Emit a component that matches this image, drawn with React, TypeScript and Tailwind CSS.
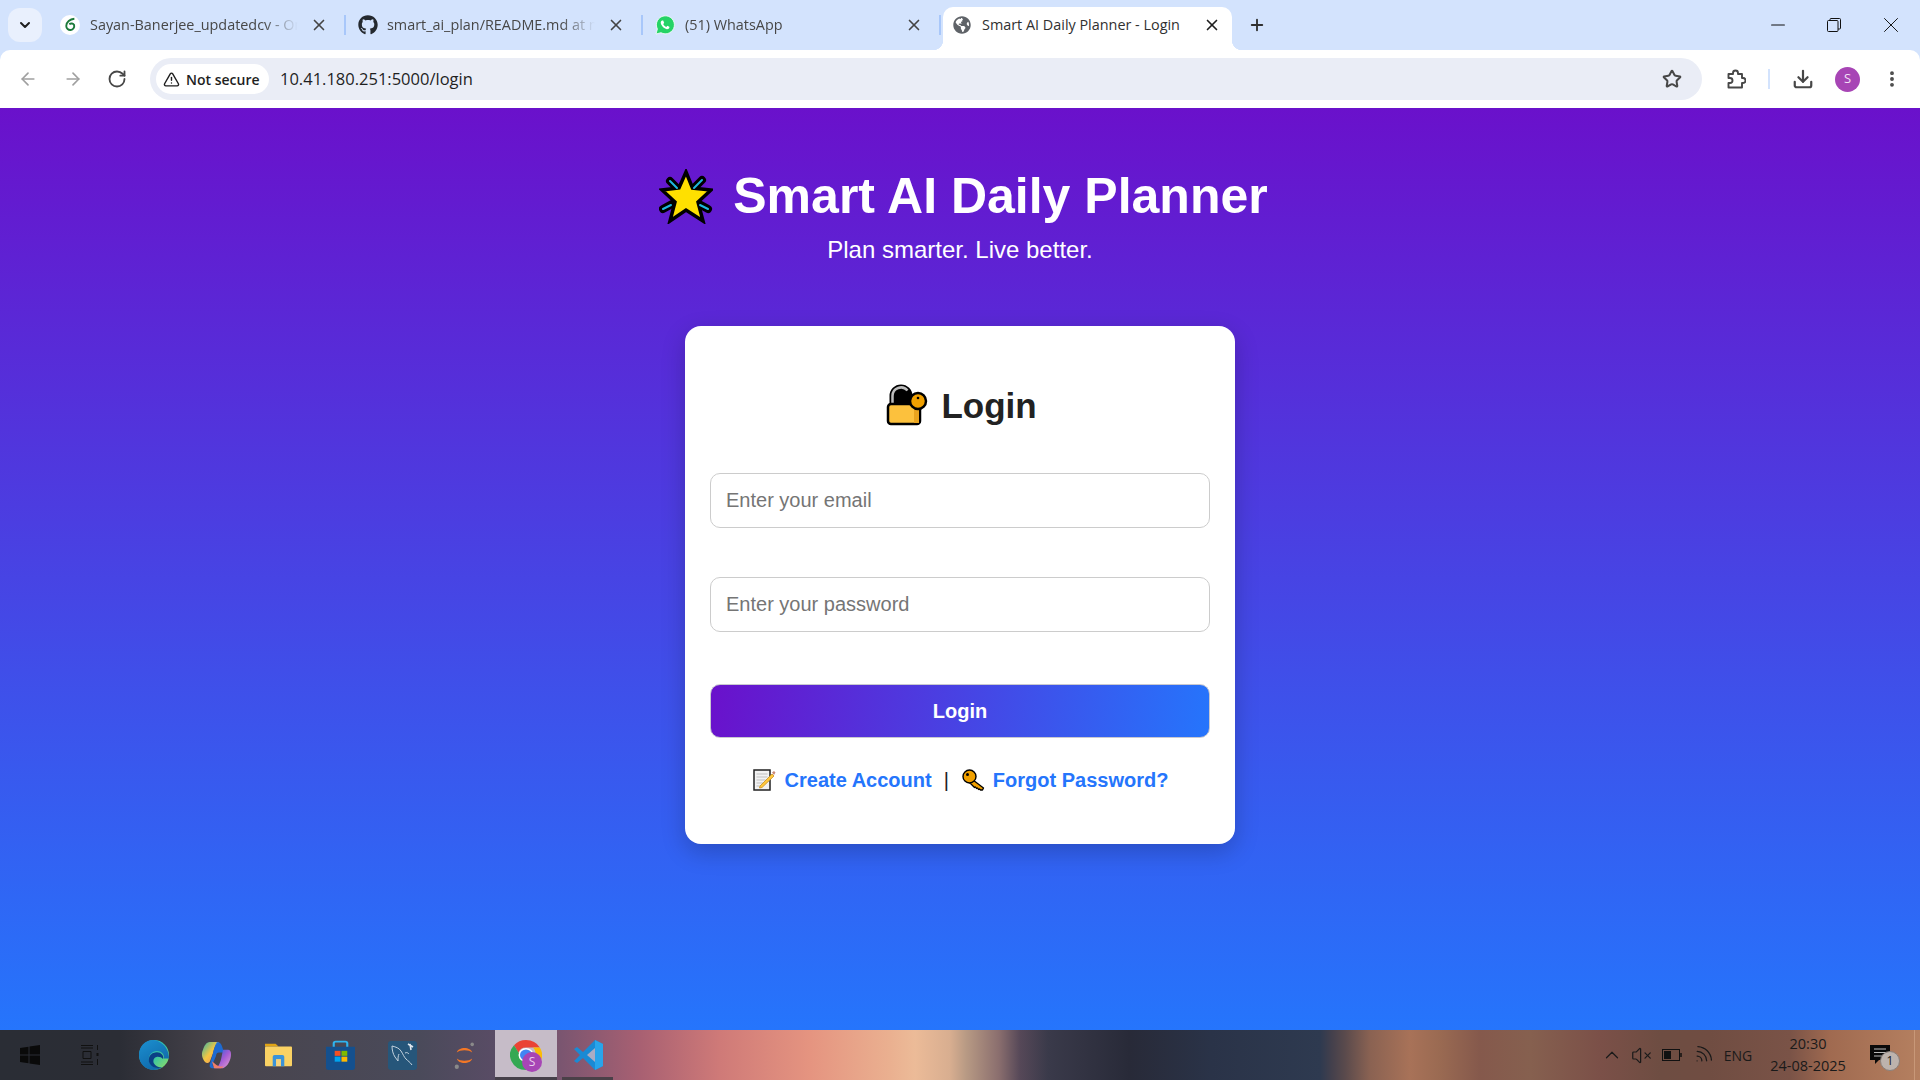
import {
  ArrowLeft,
  ArrowRight,
  ChevronDown,
  ChevronUp,
  Download,
  EllipsisVertical,
  Minus,
  Plus,
  RotateCw,
  Star,
  TriangleAlert,
  VolumeX,
  Wifi,
  X,
} from "lucide-react";
import { FaGithub, FaGlobeAmericas } from "react-icons/fa";
import type { ReactNode } from "react";

const OverleafIcon = () => (
  <svg viewBox="0 0 16 16" className="w-[20px] h-[20px] shrink-0">
    <circle cx="8" cy="8" r="8" fill="#fff" />
    <path d="M11.5 3C8 3.3 5 5.5 5 8.8a3.2 3.2 0 1 0 6.3-.8C10.6 6.6 8.8 6.5 7.4 7.3" fill="none" stroke="#1c7a3a" strokeWidth="1.5" />
  </svg>
);

const WhatsAppIcon = () => (
  <svg viewBox="0 0 20 20" className="w-[20px] h-[20px] shrink-0">
    <path d="M1 19l1.4-5A9 9 0 1 1 6 17.7z" fill="#25d366" stroke="#fff" strokeWidth="0.8" />
    <path d="M7 5.5c-.8.4-1.5 1.4-1.2 2.8.5 2.4 3.3 5.4 6 5.9 1.3.2 2.3-.5 2.6-1.4l-.1-1-2-1-1 1.1c-1.300-.5-2.500-1.700-3.100-3l1-1-1-2.300z" fill="#fff" />
  </svg>
);

const tabs = [
  { title: "Sayan-Banerjee_updatedcv - Online LaTeX Editor", icon: <OverleafIcon />, width: "w-[297px]" },
  { title: "smart_ai_plan/README.md at main", icon: <FaGithub className="ml-[1px] mr-[-1px] w-[20px] h-[20px] shrink-0 text-[#24292f]" />, width: "w-[298px]" },
  { title: "(51) WhatsApp", icon: <WhatsAppIcon />, width: "w-[298px]" },
];

const SparkleStar = () => (
  <svg viewBox="0 0 54 55" className="w-[54px] h-[55px] shrink-0">
    <g stroke="#000" strokeWidth="8" strokeLinecap="round">
      <path d="M11 12l7 7M43 11l-9 9M4 40l9-5M49 40l-9-5" />
    </g>
    <path d="M27 3l6.500 16L52 21 39 33l5 19-17-11-16 11 5-19L3 21l17-2z" fill="#ffe000" stroke="#000" strokeWidth="3.500" strokeLinejoin="miter" />
    <g stroke="#1eb8e0" strokeWidth="2" strokeLinecap="round">
      <path d="M11 12l7 7M43 11l-8 8M4 40l8-4M49 40l-8-4" />
    </g>
  </svg>
);

const LockKey = () => (
  <svg viewBox="0 0 42 42" className="w-[42px] h-[42px] shrink-0">
    <path d="M3.500 24V12a11.500 11.500 0 0 1 23 0v12z" fill="#000" />
    <path d="M6.500 22V12a8.500 8.500 0 0 1 15-5.500" fill="none" stroke="#bdbdbd" strokeWidth="2.500" />
    <rect x="2" y="20" width="32" height="20" rx="3" fill="#fcc13d" stroke="#000" strokeWidth="2.500" />
    <path d="M28 25h5v14h-5z" fill="#e9a41f" />
    <circle cx="32" cy="17" r="8" fill="#f0a000" stroke="#000" strokeWidth="2.500" />
    <circle cx="32" cy="14" r="1.300" fill="#000" />
  </svg>
);

const Memo = () => (
  <svg viewBox="0 0 23 22" className="w-[23px] h-[22px] shrink-0">
    <path d="M1 1h16v20H1z" fill="#f2f2f2" stroke="#222" strokeWidth="1.500" />
    <path d="M3.500 5h11M3.500 8h11M3.500 11h9M3.500 14h7M3.500 17h5" stroke="#bfbfbf" strokeWidth="1" />
    <path d="M7 17l12-12 2 2L9 18.500 6.500 19z" fill="#ffc83d" stroke="#c98f1c" strokeWidth="0.800" />
    <path d="M19 3.500l2-1.500 1.500 1.500-1.500 2.500z" fill="#c98a78" />
  </svg>
);

const KeyIcon = () => (
  <svg viewBox="0 0 23 22" className="w-[23px] h-[22px] shrink-0">
    <path d="M8 14l3-3 10.500 8-1 2h-2l-1-1-1 .5-1-1.500-1 .5-1-1.500-1 .5-2-2z" fill="#f0a000" stroke="#000" strokeWidth="1.300" strokeLinejoin="round" />
    <circle cx="7.500" cy="7.500" r="6.500" fill="#f0a000" stroke="#000" strokeWidth="1.400" />
    <circle cx="5.500" cy="5.500" r="1.500" fill="#000" />
  </svg>
);

const WindowsLogo = () => (
  <svg viewBox="0 0 20 20" className="w-[20px] h-[20px]">
    <path d="M0 3l8.500-1.200V9.500H0zM9.500 1.600L20 0v9.500H9.500zM0 10.500h8.500v7.700L0 17zM9.500 10.500H20V20L9.500 18.400z" fill="#0a0a0a" />
  </svg>
);

const TaskView = () => (
  <svg viewBox="0 0 20 20" className="w-[20px] h-[20px]" fill="none" stroke="#111" strokeWidth="1">
    <path d="M1 0.500h12M1 3h12M3 6.500h8v7H3zM1 17h12M1 19.500h12M17.500 0v5M17.500 14v6" />
    <path d="M17.500 8v3" strokeWidth="2" />
  </svg>
);

const EdgeIcon = () => (
  <svg viewBox="0 0 30 30" className="w-[30px] h-[30px]">
    <defs>
      <linearGradient id="edgeA" x1="0" y1="0" x2="1" y2="1">
        <stop offset="0" stopColor="#1aa5d8" />
        <stop offset="0.55" stopColor="#36c4a5" />
        <stop offset="1" stopColor="#9ae05e" />
      </linearGradient>
      <linearGradient id="edgeB" x1="0" y1="0" x2="0.6" y2="1">
        <stop offset="0" stopColor="#1c8fd0" />
        <stop offset="1" stopColor="#0c62ab" />
      </linearGradient>
    </defs>
    <circle cx="15" cy="15" r="15" fill="url(#edgeA)" />
    <path d="M14 0C6 0 0 6.500 0 15c0 8.500 6.500 15 14.500 15 3.500 0 6.500-1 9-3-4 1.500-10 .5-12.500-3.500-2.500-4-1-9.500 3-11.500 3.500-1.700 8-1 10 2 1 1.500 1 3 .5 4.500h5.500C30 12 27 6 22 3c-2.500-2-5.500-3-8-3z" fill="url(#edgeB)" opacity="0.95" />
    <path d="M14 13c-4 2-5.500 7-3 11 2.500 3.800 8 5 12.500 3-3 .8-7-.5-8.500-3.500-1.500-3 0-6 2.500-6.500 2.500-.5 5 .5 6.500 2 .5-2 0-3.500-1-4.500-2-2.500-5.500-3-8.500-1.500z" fill="#0b3f86" />
  </svg>
);

const CopilotIcon = () => (
  <svg viewBox="0 0 30 32" preserveAspectRatio="none" className="w-[30px] h-[28px]">
    <defs>
      <linearGradient id="copA" x1="0" y1="0" x2="1" y2="1">
        <stop offset="0" stopColor="#2fb5a8" />
        <stop offset="0.5" stopColor="#f4c542" />
        <stop offset="1" stopColor="#f08a5b" />
      </linearGradient>
      <linearGradient id="copB" x1="0" y1="0" x2="1" y2="1">
        <stop offset="0" stopColor="#1e63d6" />
        <stop offset="0.5" stopColor="#a35bd6" />
        <stop offset="1" stopColor="#e6a0d0" />
      </linearGradient>
    </defs>
    <path d="M9 1h9c-4 3-5 8-6 13l-3 9c-1 2-3 3-5 1-3-4-4-10-2-14 1-4 3-9 7-9z" fill="url(#copA)" />
    <path d="M16 1c3 0 4 2 5 5l2 7h-5c-2 0-3 2-3 4l-3 8c-1 3 0 5 3 6h-4c-2 0-3-2-2-5l3-12c1-5 2-10 4-13z" fill="#1a6fe0" opacity="0.9" />
    <path d="M22 10h5c2 0 3 2 3 5 0 6-3 14-8 16h-8c4-2 5-6 6-10l2-11z" fill="url(#copB)" />
    <path d="M11 23l2 8h7c1 0 2-1 2.500-2-3 .5-6-.5-8-2.500z" fill="#f07f6a" />
  </svg>
);

const ExplorerIcon = () => (
  <svg viewBox="0 0 28 28" preserveAspectRatio="none" className="w-[27px] h-[24px]">
    <path d="M0 1h11l3 3H0z" fill="#e0a416" />
    <rect x="0" y="4" width="28" height="23" rx="1" fill="#fad264" />
    <path d="M8 27V16a2 2 0 0 1 2-2h8a2 2 0 0 1 2 2v11h-3.500v-8h-5v8z" fill="#3b93d8" />
    <rect x="11.500" y="19" width="5" height="8" fill="#f5d27c" />
  </svg>
);

const StoreIcon = () => (
  <svg viewBox="0 0 30 36" preserveAspectRatio="none" className="w-[29px] h-[30px]">
    <path d="M8 9V4a2 2 0 0 1 2-2h10a2 2 0 0 1 2 2v5" fill="none" stroke="#2eb4f0" strokeWidth="2.200" />
    <path d="M0 8h30v25a3 3 0 0 1-3 3H3a3 3 0 0 1-3-3z" fill="#14508e" />
    <rect x="9" y="13" width="6" height="6" fill="#f25022" />
    <rect x="16" y="13" width="6" height="6" fill="#7fba00" />
    <rect x="9" y="20" width="6" height="6" fill="#00a4ef" />
    <rect x="16" y="20" width="6" height="6" fill="#ffb900" />
  </svg>
);

const WorkbenchIcon = () => (
  <svg viewBox="0 0 29 29" className="w-[29px] h-[29px]">
    <rect width="29" height="29" rx="3" fill="#26567a" />
    <path d="M4 5c4 1 7 2 9 5 2 3 3 6 5 8 2 2 4 3 6 6M4 5c0 4 1 8 3 11l3 4c0-3 0-5 1-7M17 12c2-1 3 0 4 1" fill="none" stroke="#c4d3df" strokeWidth="1" />
    <path d="M20 3l5 3M22 3l1 6" stroke="#dfe7ed" strokeWidth="1.600" />
  </svg>
);

const JupyterIcon = () => (
  <svg viewBox="0 0 30 36" preserveAspectRatio="none" className="w-[21px] h-[27px]">
    <path d="M4 14c2-8 20-8 22 0-5-4-17-4-22 0zM4 22c2 8 20 8 22 0-5 4-17 4-22 0z" fill="#f37726" />
    <circle cx="26" cy="3" r="2.500" fill="#8a8a8a" />
    <circle cx="4" cy="33" r="3" fill="#8a8a8a" />
  </svg>
);

const ChromeIcon = () => (
  <div className="relative w-[32px] h-[30px]">
    <svg viewBox="0 0 32 32" preserveAspectRatio="none" className="w-[32px] h-[30px]">
      <path d="M16 0a16 16 0 0 1 13.860 8H16a8 8 0 0 0-7.600 5.500L4 5.500A16 16 0 0 1 16 0z" fill="#ea4335" />
      <path d="M29.860 8A16 16 0 0 1 16 32l6.900-12a8 8 0 0 0 0-12z" fill="#fbbc05" />
      <path d="M16 32A16 16 0 0 1 4 5.500l7 12a6 6 0 0 0 8 5z" fill="#34a853" />
      <circle cx="16" cy="16" r="7.500" fill="#fff" />
      <circle cx="16" cy="16" r="6" fill="#4285f4" />
    </svg>
    <span className="absolute right-0 bottom-[-2px] w-[20px] h-[20px] rounded-full bg-[#a745b5] text-[#e8d0ee] text-[12px] flex items-center justify-center font-['Open_Sans',sans-serif]">
      S
    </span>
  </div>
);

const VsCodeIcon = () => (
  <svg viewBox="0 0 30 30" className="w-[30px] h-[30px]">
    <path d="M22 0l8 4v22l-8 4-12-12-6 5-3-2 6-6-6-6 3-2 6 5z" fill="#1a8ad4" />
    <path d="M22 0l8 4v22l-8 4z" fill="#29a4ea" />
    <path d="M22 8l-8 7 8 7z" fill="#c5b2c0" opacity="0.85" />
  </svg>
);

const PuzzleIcon = () => (
  <svg viewBox="0 0 20 20" className="ml-[24px] w-[20px] h-[20px]" fill="none" stroke="#474747" strokeWidth="1.900" strokeLinejoin="round">
    <path d="M2.500 5H7V4a2.500 2.500 0 0 1 5 0v1h4v4h1a2.500 2.500 0 0 1 0 5h-1v4.500H2.500V14H4a2.500 2.500 0 0 0 0-5H2.500z" />
  </svg>
);

const taskbarApps: { key: string; node: ReactNode; active?: boolean; underline?: boolean }[] = [
  { key: "edge", node: <EdgeIcon /> },
  { key: "copilot", node: <CopilotIcon /> },
  { key: "explorer", node: <ExplorerIcon /> },
  { key: "store", node: <StoreIcon /> },
  { key: "mysql", node: <WorkbenchIcon /> },
  { key: "jupyter", node: <JupyterIcon /> },
  { key: "chrome", node: <ChromeIcon />, active: true },
  { key: "code", node: <VsCodeIcon />, underline: true },
];

const App = () => {
  return (
    <div className="w-[1920px] h-[1080px] overflow-hidden flex flex-col font-['Liberation_Sans',Arial,sans-serif]">
      {/* Tab strip */}
      <div className="h-[50px] shrink-0 bg-[#d3e3fd] flex items-end pl-[8px] text-[14.400px] font-['Open_Sans',sans-serif]">
        <div className="self-start mt-[8px] w-[34px] h-[34px] mr-[8px] rounded-[12px] bg-[#e9f0fd] flex items-center justify-center">
          <ChevronDown className="w-[16px] h-[16px] text-[#1f1f1f]" strokeWidth={3} />
        </div>
        {tabs.map((tab) => (
          <div key={tab.title} className={`${tab.width} h-[43px] flex items-center pl-[10px] pb-[8px] text-[#474747] shrink-0`}>
            {tab.icon}
            <span className="ml-[10px] w-[212px] overflow-hidden whitespace-nowrap [mask-image:linear-gradient(to_right,black_82%,transparent_98%)]">
              {tab.title}
            </span>
            <X className="ml-[8px] w-[18px] h-[18px] text-[#444] shrink-0" strokeWidth={2.2} />
            <div className="ml-[16px] w-[2px] h-[20px] bg-[#a8c7fa] shrink-0" />
          </div>
        ))}
        <div className="relative w-[289px] h-[43px] shrink-0 bg-white rounded-t-[10px] flex items-center pl-[10px] pb-[8px] text-[#303030]">
          <span className="absolute left-[-10px] bottom-0 w-[10px] h-[10px] bg-[radial-gradient(circle_at_0_0,transparent_10px,white_10.5px)]" />
          <span className="absolute right-[-10px] bottom-0 w-[10px] h-[10px] bg-[radial-gradient(circle_at_100%_0,transparent_10px,white_10.5px)]" />
          <FaGlobeAmericas className="w-[18px] h-[18px] text-[#5f6368] shrink-0" />
          <span className="ml-[11px] whitespace-nowrap">Smart AI Daily Planner - Login</span>
          <X className="absolute right-[11px] w-[18px] h-[18px] text-[#1f1f1f]" strokeWidth={2.2} />
        </div>
        <Plus className="self-center mb-[1px] ml-[16px] w-[18px] h-[18px] text-[#303030]" strokeWidth={2.5} />
        <div className="ml-auto self-start flex h-[50px] items-center">
          <div className="w-[57px] flex justify-center">
            <Minus className="w-[22px] h-[22px] text-[#111]" strokeWidth={1.1} />
          </div>
          <div className="w-[56px] flex justify-center">
            <svg viewBox="0 0 14 14" className="w-[14px] h-[14px]" fill="none" stroke="#111" strokeWidth="1">
              <rect x="0.500" y="2.500" width="10.500" height="11" rx="1" />
              <path d="M3 2.500V1.500a1 1 0 0 1 1-1h8.500a1 1 0 0 1 1 1V10a1 1 0 0 1-1 1H11" />
            </svg>
          </div>
          <div className="w-[58px] flex justify-center">
            <X className="w-[26px] h-[26px] text-[#111]" strokeWidth={0.9} />
          </div>
        </div>
      </div>

      {/* Toolbar */}
      <div className="h-[58px] shrink-0 bg-[#d3e3fd]">
        <div className="h-full bg-white rounded-t-[10px] flex items-center pl-[18px] text-[#474747]">
          <ArrowLeft className="w-[20px] h-[20px] text-[#a0a0a0]" />
          <ArrowRight className="ml-[25px] w-[20px] h-[20px] text-[#a0a0a0]" />
          <RotateCw className="ml-[24px] w-[20px] h-[20px] text-[#474747]" strokeWidth={2.2} />
          <div className="ml-[23px] w-[1552px] h-[42px] rounded-full bg-[#eaedf6] flex items-center pl-[6px] pr-[20px]">
            <div className="w-[113px] h-[30px] rounded-full bg-white flex items-center pl-[7px] text-[#1f1f1f]">
              <TriangleAlert className="w-[17px] h-[17px]" strokeWidth={2} />
              <span className="ml-[6px] text-[14px] font-semibold font-['Open_Sans',sans-serif] whitespace-nowrap">Not secure</span>
            </div>
            <span className="ml-[11px] text-[16.500px] text-[#1f1f1f] font-['Open_Sans',sans-serif]">10.41.180.251:5000/login</span>
            <Star className="ml-auto w-[20px] h-[20px] text-[#474747]" strokeWidth={2.4} />
          </div>
          <PuzzleIcon />
          <div className="ml-[22px] w-[2px] h-[20px] bg-[#d3e3fd]" />
          <Download className="ml-[22px] w-[22px] h-[22px]" strokeWidth={2.4} />
          <div className="ml-[21px] w-[25px] h-[25px] rounded-full bg-[#a745b5] text-[#f3e2f6] text-[13px] flex items-center justify-center font-['Open_Sans',sans-serif]">
            S
          </div>
          <EllipsisVertical className="ml-[22px] w-[20px] h-[20px]" strokeWidth={2.6} />
        </div>
      </div>

      {/* Page */}
      <main className="flex-1 bg-[linear-gradient(180deg,#6a11cb,#2575fc)] flex flex-col items-center text-white">
        <div className="mt-[59px] ml-[7px] h-[58px] flex items-center gap-[20px]">
          <SparkleStar />
          <h1 className="text-[50px] font-bold leading-none whitespace-nowrap">Smart AI Daily Planner</h1>
        </div>
        <p className="mt-[11px] h-[28px] text-[24px] leading-[28px]">Plan smarter. Live better.</p>

        <div className="mt-[62px] w-[550px] rounded-[16px] bg-white shadow-[0_8px_25px_rgba(0,0,0,0.2)] px-[25px] pt-[57px] pb-[50px] flex flex-col text-[#222]">
          <div className="h-[44px] pl-[3px] flex items-center justify-center gap-[13px]">
            <LockKey />
            <h2 className="text-[35px] font-bold leading-none">Login</h2>
          </div>
          <input
            placeholder="Enter your email"
            className="mt-[46px] h-[55px] rounded-[10px] border border-[#ccc] px-[15px] text-[20px] bg-white placeholder:text-[#757575] outline-none"
          />
          <input
            placeholder="Enter your password"
            className="mt-[49px] h-[55px] rounded-[10px] border border-[#ccc] px-[15px] text-[20px] bg-white placeholder:text-[#757575] outline-none"
          />
          <button className="mt-[52px] h-[54px] rounded-[10px] border border-[#c8c8d0] bg-[linear-gradient(100deg,#6a11cb,#2575fc)] text-white text-[20px] font-bold">
            Login
          </button>
          <div className="mt-[28px] h-[28px] pl-[1px] flex items-center justify-center text-[20px]">
            <Memo />
            <a className="ml-[9px] font-bold text-[#2575fc] whitespace-nowrap">Create Account</a>
            <span className="ml-[12px] text-[#222]">|</span>
            <span className="ml-[13px]">
              <KeyIcon />
            </span>
            <a className="ml-[8px] font-bold text-[#2575fc] whitespace-nowrap">Forgot Password?</a>
          </div>
        </div>
      </main>

      {/* Windows taskbar */}
      <div className="h-[50px] shrink-0 flex items-stretch text-[#1a1a1a] font-['Open_Sans',sans-serif] bg-[linear-gradient(90deg,#2a2d35_0px,#2b2d35_120px,#48444c_220px,#4a4a5a_420px,#5a4c66_500px,#7a5570_560px,#a86072_640px,#cf7a78_720px,#e59480_810px,#eab090_890px,#ecbb98_915px,#d8ae90_950px,#b89a84_966px,#8a6e6e_999px,#564858_1020px,#3a3a4a_1048px,#282a38_1130px,#2a3348_1211px,#2e3a50_1320px,#44404c_1332px,#5a4a4c_1345px,#8a6252_1370px,#a87258_1410px,#9a6a52_1440px,#85594c_1480px,#86604f_1530px,#7b5048_1600px,#6e4d42_1660px,#704d42_1710px,#7a5347_1790px,#a06a50_1830px,#b58060_1920px)]">
        <div className="w-[60px] flex items-center justify-center">
          <WindowsLogo />
        </div>
        <div className="w-[60px] mr-[3px] flex items-center justify-center">
          <TaskView />
        </div>
        {taskbarApps.map((app) => (
          <div key={app.key} className={`relative w-[62px] flex items-center justify-center ${app.active ? "bg-[#c6bcc8]" : ""}`}>
            {app.node}
            {app.active && <span className="absolute left-0 right-0 bottom-0 h-[3px] bg-[#46404a]" />}
            {app.underline && <span className="absolute left-[5px] right-[6px] bottom-0 h-[3px] bg-[#4a4048]" />}
          </div>
        ))}
        <div className="ml-auto flex items-center pr-[5px]">
          <div className="w-[30px] flex justify-center">
            <ChevronUp className="w-[22px] h-[22px]" strokeWidth={1.3} />
          </div>
          <div className="w-[29px] flex justify-center">
            <VolumeX className="w-[21px] h-[21px]" strokeWidth={1.4} />
          </div>
          <div className="w-[32px] flex justify-center">
            <svg viewBox="0 0 20 12" className="w-[20px] h-[12px]" fill="none" stroke="#111" strokeWidth="1">
              <rect x="0.500" y="0.500" width="17" height="11" />
              <rect x="2" y="2" width="7" height="8" fill="#111" stroke="none" />
              <path d="M19 4v4" strokeWidth="1.500" />
            </svg>
          </div>
          <div className="w-[30px] flex justify-center">
            <Wifi className="mr-[2px] w-[23px] h-[23px] rotate-45" strokeWidth={1.3} />
          </div>
          <div className="w-[40px] text-center text-[14px]">ENG</div>
          <div className="w-[100px] text-center text-[14.500px] leading-[22px]">
            <div>20:30</div>
            <div>24-08-2025</div>
          </div>
          <div className="relative w-[44px] flex justify-center">
            <svg viewBox="0 0 20 20" className="w-[20px] h-[20px]">
              <path d="M0 0h20v15H9l-4 4v-4H0z" fill="#0a0a0a" />
              <path d="M4 4h12M4 7.500h12M4 11h12" stroke="#bbb" strokeWidth="1" />
            </svg>
            <span className="absolute left-[22px] top-[6px] w-[20px] h-[20px] rounded-full bg-[#bdb3ad] border border-[#8a817c] text-[12px] flex items-center justify-center">
              1
            </span>
          </div>
          <div className="ml-[12px] w-px h-full bg-[#c89878]" />
        </div>
      </div>
    </div>
  );
};

export default App;
